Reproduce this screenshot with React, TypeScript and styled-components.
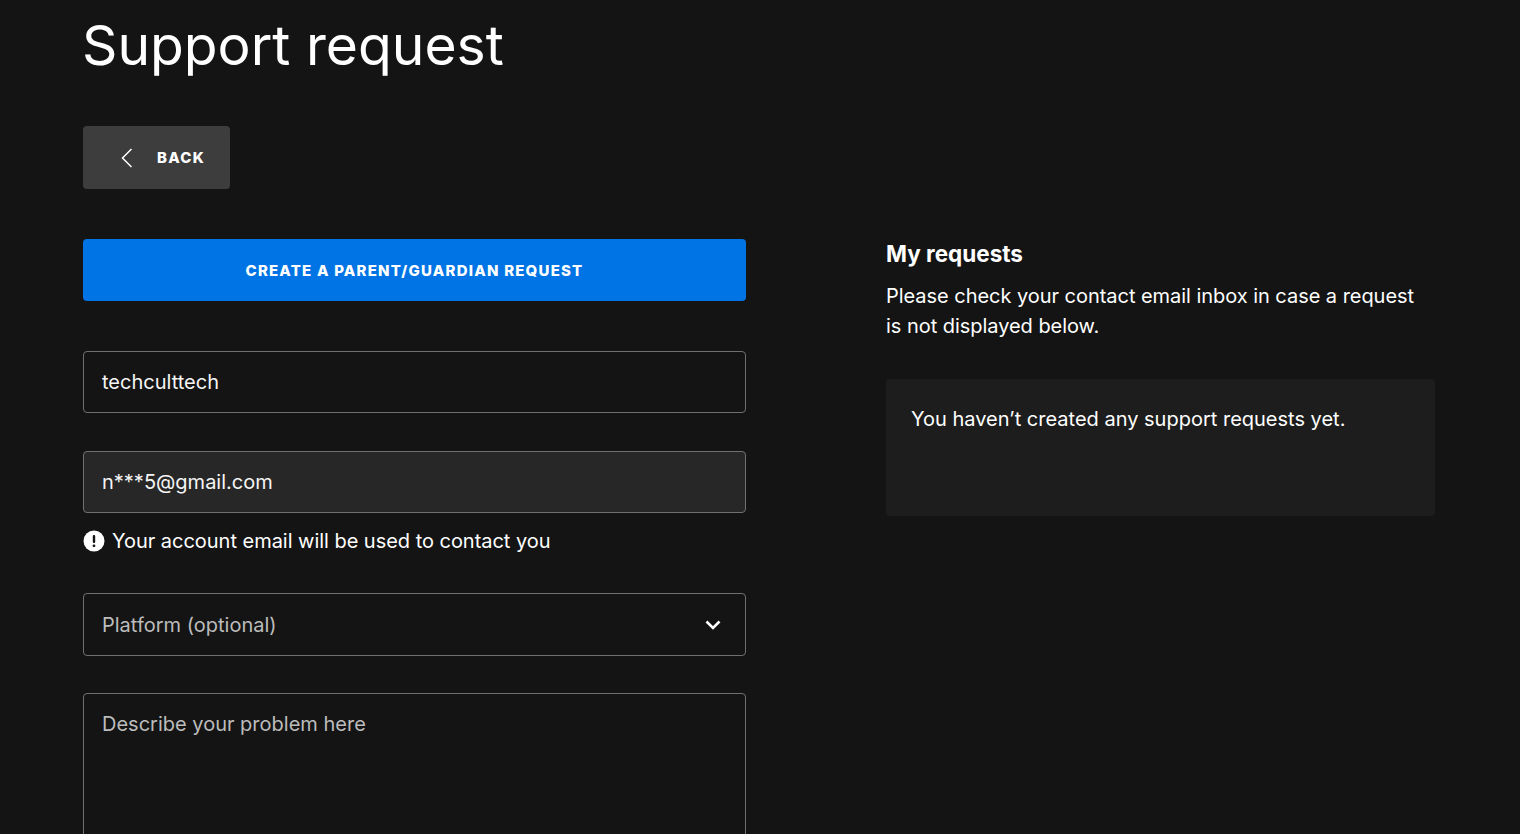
import React from 'react';
import styled, { createGlobalStyle } from 'styled-components';

const GlobalStyle = createGlobalStyle`
  html, body {
    margin: 0;
    height: 834px;
    overflow: hidden;
    background: #141414;
    color: #fff;
    font-family: Inter, "Liberation Sans", sans-serif;
  }
`;

const Page = styled.div`
  height: 834px;
  overflow: hidden;
  padding: 0 85px 0 83px;
  box-sizing: border-box;
`;

const Title = styled.h1`
  margin: 0 0 0 -1px;
  padding-top: 14px;
  font-size: 55.2px;
  font-weight: 400;
  line-height: 62px;
`;

const BackButton = styled.button`
  display: flex;
  align-items: center;
  gap: 24px;
  width: 147px;
  height: 63px;
  margin-top: 50px;
  padding: 0 0 0 37px;
  border: 0;
  border-radius: 4px;
  background: #3d3d3d;
  color: #fff;
  font: 800 15px Inter, sans-serif;
  letter-spacing: 1.25px;
`;

const Columns = styled.div`
  display: grid;
  grid-template-columns: 663px 549px;
  gap: 140px;
  margin-top: 50px;
`;

const Form = styled.div`
  display: flex;
  flex-direction: column;
`;

const PrimaryButton = styled.button`
  height: 62px;
  margin-bottom: 50px;
  border: 0;
  border-radius: 4px;
  background: #0074e4;
  color: #fff;
  font: 800 15px Inter, sans-serif;
  letter-spacing: 1.2px;
`;

const Field = styled.div<{ $filled?: boolean; $muted?: boolean; $height: number; $tall?: boolean; $gap: number }>`
  display: flex;
  align-items: ${(p) => (p.$tall ? 'flex-start' : 'center')};
  justify-content: space-between;
  flex: none;
  height: ${(p) => p.$height}px;
  margin-bottom: ${(p) => p.$gap}px;
  padding: ${(p) => (p.$tall ? '18px 24px 0 18px' : '0 24px 0 18px')};
  border: 1px solid #707070;
  border-radius: 4px;
  background: ${(p) => (p.$filled ? '#272727' : 'transparent')};
  color: ${(p) => (p.$muted ? '#bcbcbc' : '#f5f5f5')};
  font-size: 20px;
`;

const Hint = styled.div`
  display: flex;
  align-items: center;
  gap: 7px;
  margin-bottom: 38px;
  font-size: 20px;
  line-height: 28px;
  letter-spacing: -0.03px;
`;

const Side = styled.aside`
  padding-top: 1px;
`;

const SideTitle = styled.h2`
  margin: 0 0 13px;
  font-size: 22.5px;
  font-weight: 700;
  line-height: 28px;
`;

const SideText = styled.p`
  max-width: 535px;
  margin: 0 0 38px;
  font-size: 20px;
  line-height: 30px;
  letter-spacing: -0.04px;
`;

const Empty = styled.div`
  height: 137px;
  padding: 26px 25px;
  box-sizing: border-box;
  border-radius: 4px;
  background: #1d1d1d;
  font-size: 20px;
  line-height: 28px;
`;

const App: React.FC = () => (
  <>
    <GlobalStyle />
    <Page>
      <Title>Support request</Title>
      <BackButton>
        <svg width="13" height="20" viewBox="0 0 13 20" fill="none" stroke="#fff" strokeWidth="1.5">
          <path d="M11.5 1 2.5 10l9 9" />
        </svg>
        BACK
      </BackButton>
      <Columns>
        <Form>
          <PrimaryButton>CREATE A PARENT/GUARDIAN REQUEST</PrimaryButton>
          <Field $height={60} $gap={38}>techculttech</Field>
          <Field $height={60} $filled $gap={14}>n***5@gmail.com</Field>
          <Hint>
            <svg width="22" height="22" viewBox="0 0 22 22">
              <circle cx="11" cy="11" r="10.5" fill="#fff" />
              <rect x="9.8" y="5" width="2.4" height="8" rx="1" fill="#141414" />
              <circle cx="11" cy="15.8" r="1.4" fill="#141414" />
            </svg>
            Your account email will be used to contact you
          </Hint>
          <Field $height={61} $muted $gap={37}>
            Platform (optional)
            <svg width="16" height="10" viewBox="0 0 16 10" fill="none" stroke="#fff" strokeWidth="2.6">
              <path d="M1.5 1.5 8 8l6.5-6.5" />
            </svg>
          </Field>
          <Field $height={300} $muted $tall $gap={0}>Describe your problem here</Field>
        </Form>
        <Side>
          <SideTitle>My requests</SideTitle>
          <SideText>
            Please check your contact email inbox in case a request is not displayed below.
          </SideText>
          <Empty>You haven’t created any support requests yet.</Empty>
        </Side>
      </Columns>
    </Page>
  </>
);

export default App;
